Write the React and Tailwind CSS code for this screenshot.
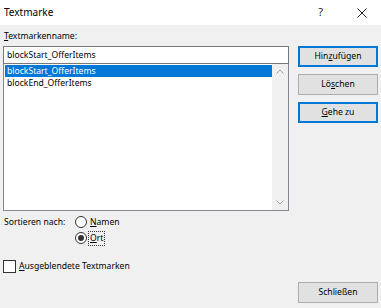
import React, { useState } from "react";

const Acc = ({ children }) => <span className="underline underline-offset-[1px]">{children}</span>;

const Button = ({ children, focused, className = "" }) => (
  <div
    className={`h-[21px] w-[80px] flex items-center justify-center bg-[#e1e1e1] ${
      focused ? "border-2 border-[#0078d7]" : "border border-[#adadad]"
    } ${className}`}
  >
    <span className="leading-none">{children}</span>
  </div>
);

const Radio = ({ checked }) => (
  <div className="w-[12px] h-[12px] rounded-full border border-[#333] bg-white flex items-center justify-center">
    {checked ? <div className="w-[6px] h-[6px] rounded-full bg-[#333]" /> : null}
  </div>
);

const App = () => {
  const [sort, setSort] = useState("ort");
  const items = ["blockStart_OfferItems", "blockEnd_OfferItems"];

  return (
    <div className="w-[381px] h-[308px] bg-[#f0f0f0] flex flex-col text-[8.6px] text-black font-['Noto_Sans',sans-serif] overflow-hidden">
      {/* Titelleiste */}
      <div className="h-[25px] bg-white flex items-center pl-[4px] shrink-0">
        <span className="text-[10px]">Textmarke</span>
        <span className="ml-auto mr-[34px] text-[11px] text-[#222]">?</span>
        <svg width="10" height="10" viewBox="0 0 10 10" className="mr-[14px]">
          <path d="M0.5 0.5 L9.5 9.5 M9.5 0.5 L0.5 9.5" stroke="#222" strokeWidth="1" />
        </svg>
      </div>

      <div className="flex flex-1 pl-[3px]">
        {/* linke Spalte */}
        <div className="w-[286px] flex flex-col">
          <div className="h-[21px] flex items-center pl-[1px] pt-[2px]">
            <span>
              <Acc>T</Acc>extmarkenname:
            </span>
          </div>
          <div className="h-[18px] bg-white border border-[#7a7a7a] flex items-center pl-[3px]">
            blockStart_OfferItems
          </div>
          <div className="h-[147px] bg-white border border-[#828790] border-t-0 flex">
            <div className="flex-1 pt-[1px] pl-[1px]">
              {items.map((it, i) => (
                <div
                  key={it}
                  className={`h-[12px] flex items-center pl-[2px] ${
                    i === 0 ? "bg-[#0078d7] text-white" : ""
                  }`}
                >
                  {it}
                </div>
              ))}
            </div>
            <div className="w-[16px] bg-[#f0f0f0] flex flex-col items-center justify-between py-[5px]">
              <svg width="8" height="5" viewBox="0 0 8 5">
                <path d="M0.5 4.5 L4 1 L7.5 4.5" fill="none" stroke="#a0a0a0" strokeWidth="1" />
              </svg>
              <svg width="8" height="5" viewBox="0 0 8 5">
                <path d="M0.5 0.5 L4 4 L7.5 0.5" fill="none" stroke="#a0a0a0" strokeWidth="1" />
              </svg>
            </div>
          </div>

          {/* Sortieren */}
          <div className="flex mt-[3px] pl-[1px]">
            <div className="w-[71px] h-[16px] flex items-center">Sortieren nach:</div>
            <div className="flex flex-col">
              <div className="h-[16px] flex items-center gap-[2px]" onClick={() => setSort("namen")}>
                <Radio checked={sort === "namen"} />
                <span className="px-[1px]">
                  <Acc>N</Acc>amen
                </span>
              </div>
              <div className="h-[16px] flex items-center gap-[1px]" onClick={() => setSort("ort")}>
                <Radio checked={sort === "ort"} />
                <span className="border border-dotted border-[#333] h-[15px] flex items-center px-[1px]">
                  <Acc>O</Acc>rt
                </span>
              </div>
            </div>
          </div>

          <div className="flex items-center h-[16px] mt-[12px] gap-[3px]">
            <div className="w-[13px] h-[13px] bg-white border border-[#333]" />
            <span>
              <Acc>A</Acc>usgeblendete Textmarken
            </span>
          </div>
        </div>

        {/* rechte Spalte */}
        <div className="ml-[9px] flex flex-col pt-[21px] pb-[5px]">
          <Button focused>
            Hin<Acc>z</Acc>ufügen
          </Button>
          <Button className="mt-[7px]">
            Lö<Acc>s</Acc>chen
          </Button>
          <Button focused className="mt-[7px]">
            <Acc>G</Acc>ehe zu
          </Button>
          <Button className="mt-auto">Schließen</Button>
        </div>
      </div>
    </div>
  );
};

export default App;
